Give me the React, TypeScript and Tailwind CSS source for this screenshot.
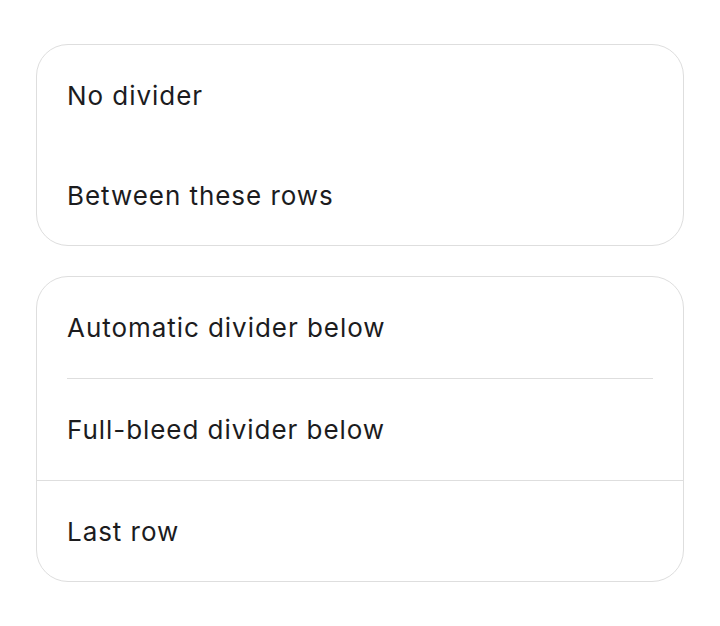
export default function App() {
  const font = { fontFamily: 'Inter, "Noto Sans", sans-serif' };
  const row = "flex items-center px-[30px] text-[26px] tracking-[0.95px] text-[#1c1c1e]";
  return (
    <div className="min-h-[626px] w-[720px] bg-white px-[36px] pt-[44px]" style={font}>
      <div className="flex flex-col gap-[30px]">
        <div className="overflow-hidden rounded-[32px] border border-[#dedede] bg-white">
          <div className={`${row} h-[100px]`}>No divider</div>
          <div className={`${row} h-[100px]`}>Between these rows</div>
        </div>
        <div className="overflow-hidden rounded-[32px] border border-[#dedede] bg-white">
          <div className={`${row} h-[101px]`}>Automatic divider below</div>
          <div className="mx-[30px] h-px bg-[#dedede]" />
          <div className={`${row} h-[101px]`}>Full-bleed divider below</div>
          <div className="h-px bg-[#dedede]" />
          <div className={`${row} h-[100px]`}>Last row</div>
        </div>
      </div>
    </div>
  );
}
